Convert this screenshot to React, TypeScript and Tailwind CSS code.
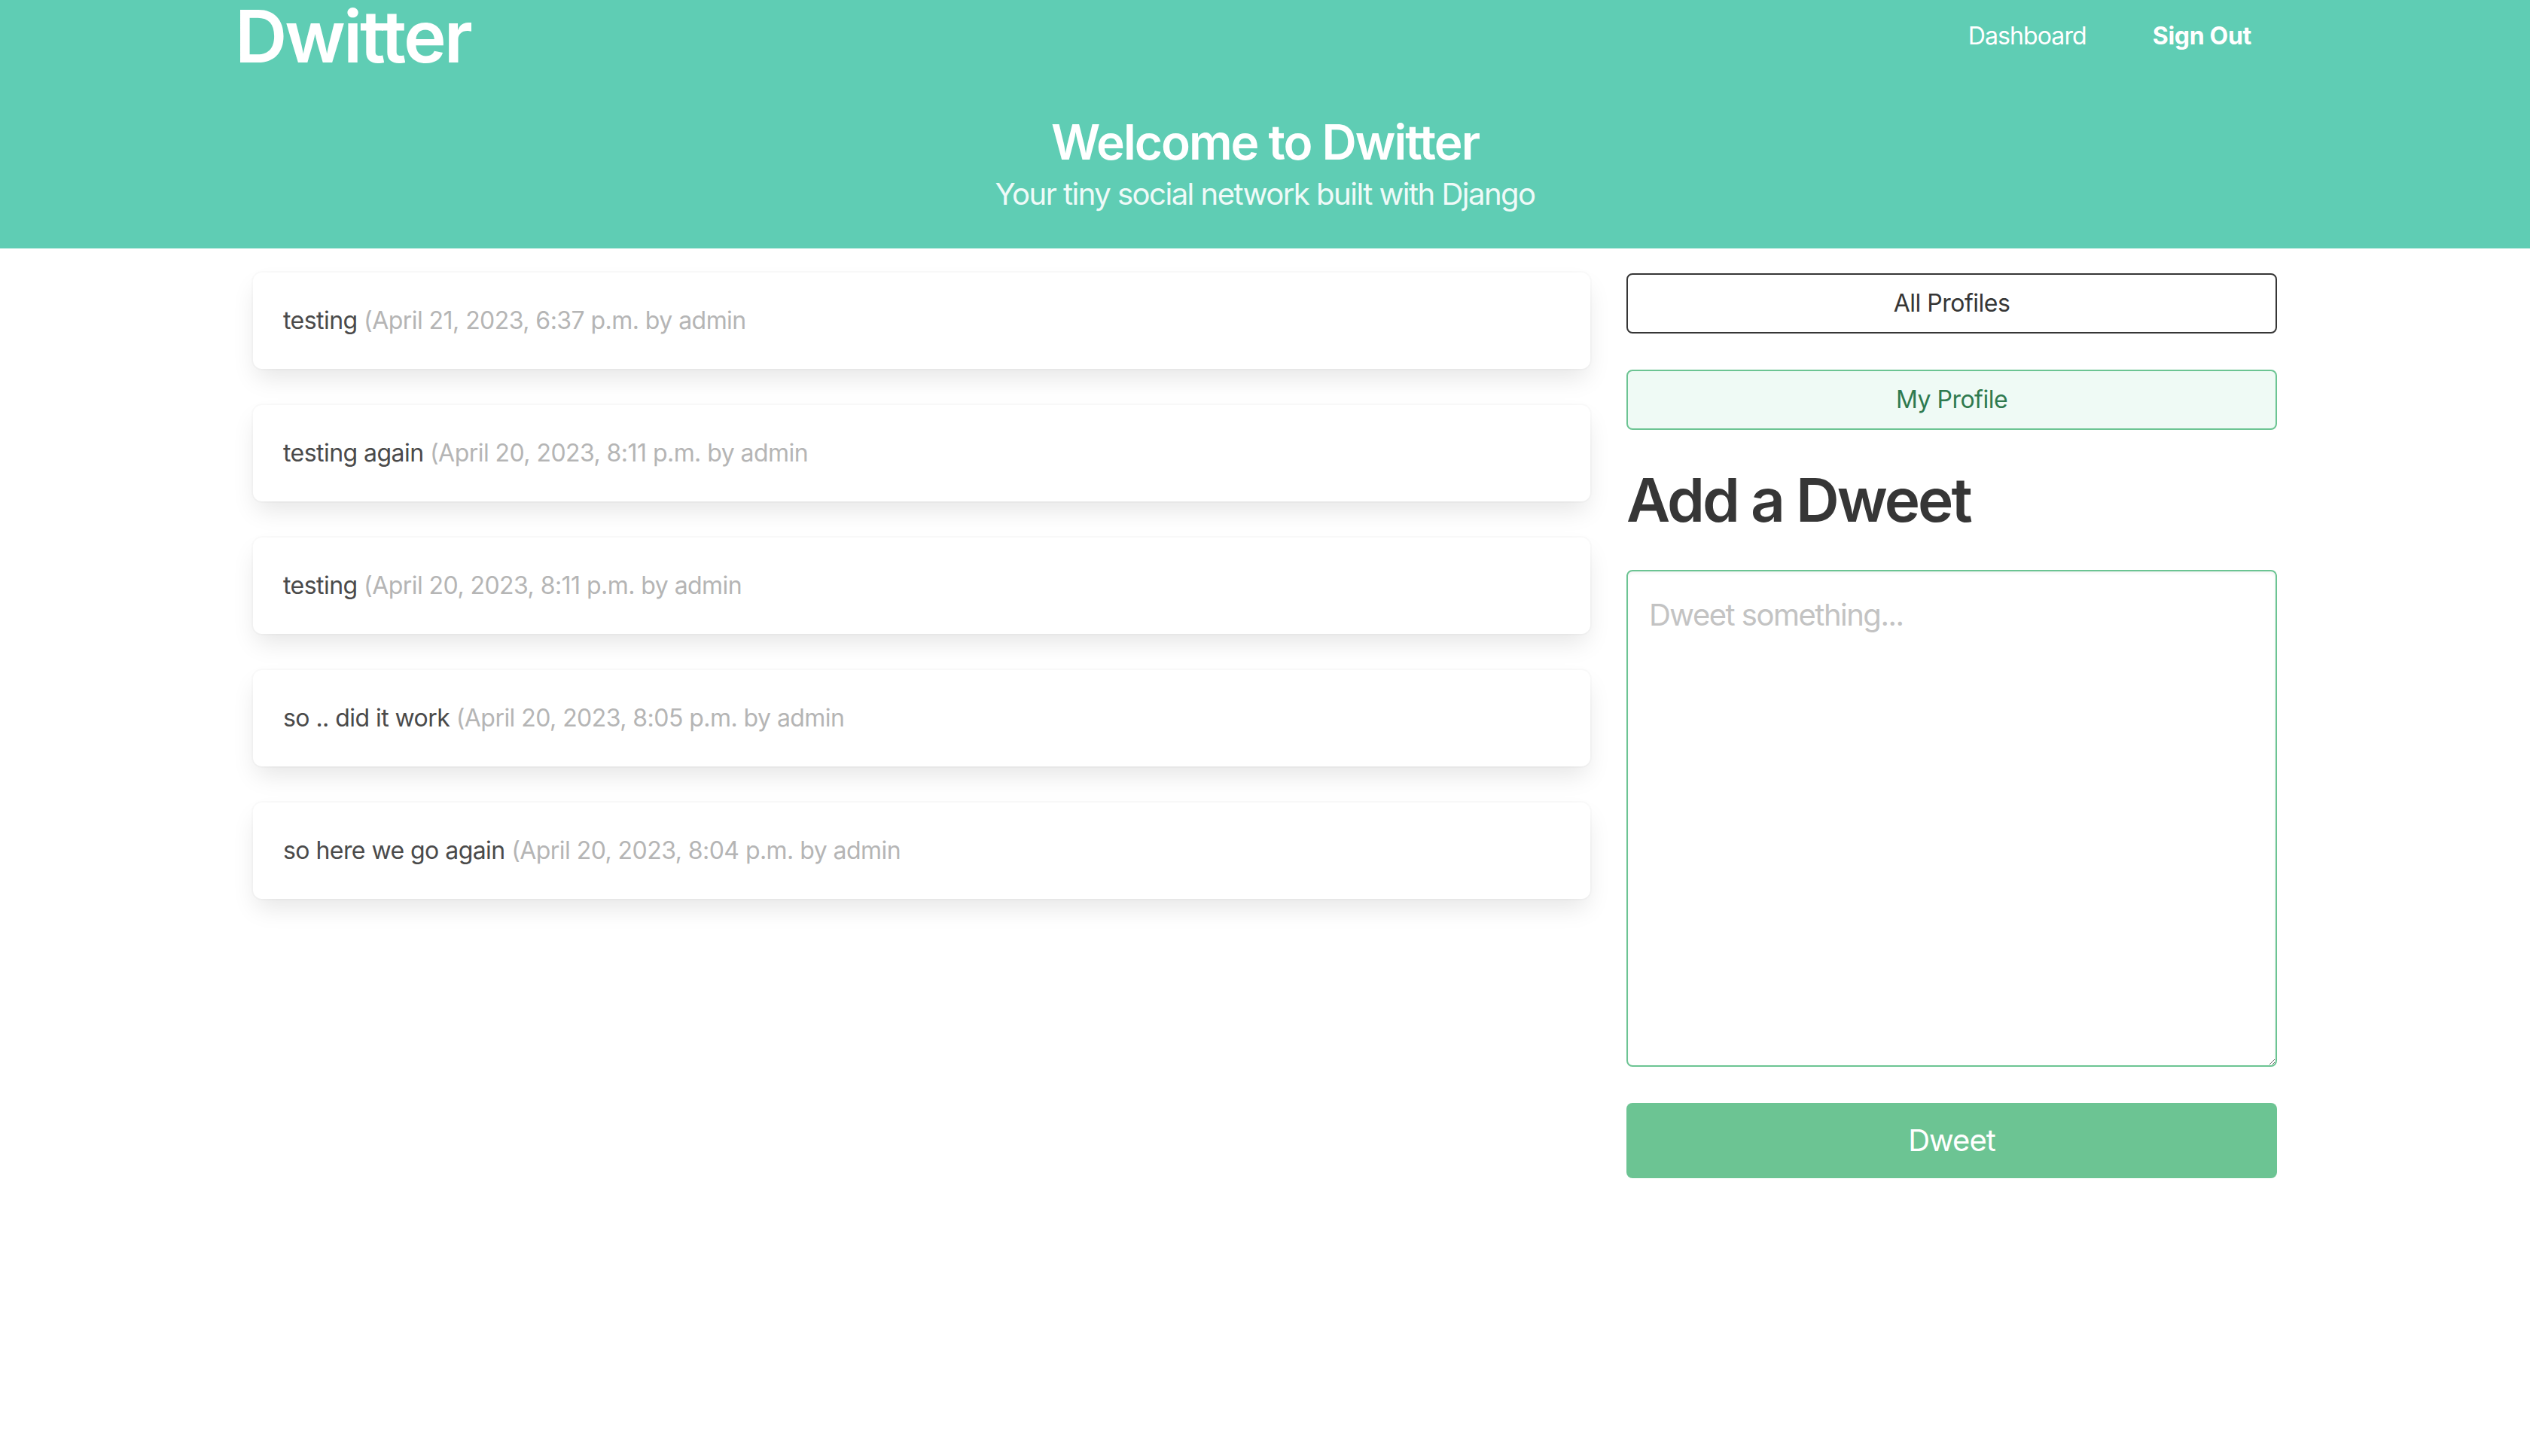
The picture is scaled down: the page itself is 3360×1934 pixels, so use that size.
import React from 'react';

interface Dweet {
  id: number;
  body: string;
  created: string;
  author: string;
}

const dweets: Dweet[] = [
  { id: 1, body: 'testing', created: 'April 21, 2023, 6:37 p.m.', author: 'admin' },
  { id: 2, body: 'testing again', created: 'April 20, 2023, 8:11 p.m.', author: 'admin' },
  { id: 3, body: 'testing', created: 'April 20, 2023, 8:11 p.m.', author: 'admin' },
  { id: 4, body: 'so .. did it work', created: 'April 20, 2023, 8:05 p.m.', author: 'admin' },
  { id: 5, body: 'so here we go again', created: 'April 20, 2023, 8:04 p.m.', author: 'admin' },
];

function Header() {
  return (
    <header className="h-[330px] bg-[#5fcdb4] text-white">
      <nav className="mx-auto flex h-[96px] w-[2736px] items-center justify-between">
        <a className="text-[96px] leading-[96px] font-semibold tracking-[-3px]">Dwitter</a>
        <div className="flex items-center gap-[88px] pr-[58px] text-[32px] leading-[48px]">
          <a className="tracking-[-0.9px]">Dashboard</a>
          <a className="font-bold tracking-[-0.3px]">Sign Out</a>
        </div>
      </nav>
      <div className="pt-[57px] text-center">
        <h1 className="text-[64px] leading-[72px] font-semibold tracking-[-2px]">Welcome to Dwitter</h1>
        <p className="mt-[8px] text-[40px] leading-[50px] tracking-[-1.5px] text-white/90">
          Your tiny social network built with Django
        </p>
      </div>
    </header>
  );
}

function DweetCard({ dweet }: { dweet: Dweet }) {
  return (
    <div className="rounded-[12px] bg-white p-[40px] text-[32px] leading-[48px] tracking-[-0.55px] shadow-[0_16px_32px_-4px_rgba(10,10,10,0.1),0_0_0_2px_rgba(10,10,10,0.02)]">
      <span className="text-[#4a4a4a]">{dweet.body}</span>{' '}
      <span className="text-[#b5b5b5]">
        ({dweet.created} by {dweet.author}
      </span>
    </div>
  );
}

export default function App() {
  return (
    <div className="min-h-[1934px] bg-white font-['Inter',sans-serif]">
      <Header />
      <main className="mx-auto flex w-[2688px] gap-[48px] pt-[32px]">
        <div className="flex w-[1776px] flex-col gap-[48px]">
          {dweets.map((d) => (
            <DweetCard key={d.id} dweet={d} />
          ))}
        </div>
        <div className="flex w-[864px] flex-col gap-[48px] pt-[1px]">
          <button className="h-[80px] w-full rounded-[8px] border-2 border-[#363636] bg-white text-[32px] tracking-[-0.5px] text-[#363636]">
            All Profiles
          </button>
          <button className="h-[80px] w-full rounded-[8px] border-2 border-[#6cc493] bg-[#effaf5] text-[32px] tracking-[-0.5px] text-[#2f7a4f]">
            My Profile
          </button>
          <h2 className="text-[80px] leading-[90px] font-semibold tracking-[-3px] text-[#363636]">Add a Dweet</h2>
          <textarea
            placeholder="Dweet something..."
            className="block h-[660px] w-full resize-y rounded-[8px] border-2 border-[#6cc493] px-[28px] py-[28px] text-[40px] leading-[60px] tracking-[-1.5px] text-[#363636] shadow-[inset_0_2px_4px_rgba(10,10,10,0.05)] outline-none placeholder:text-[#c3c3c3]"
          />
          <button className="h-[100px] w-full rounded-[8px] bg-[#6cc493] text-[40px] tracking-[-1px] text-white">
            Dweet
          </button>
        </div>
      </main>
    </div>
  );
}
